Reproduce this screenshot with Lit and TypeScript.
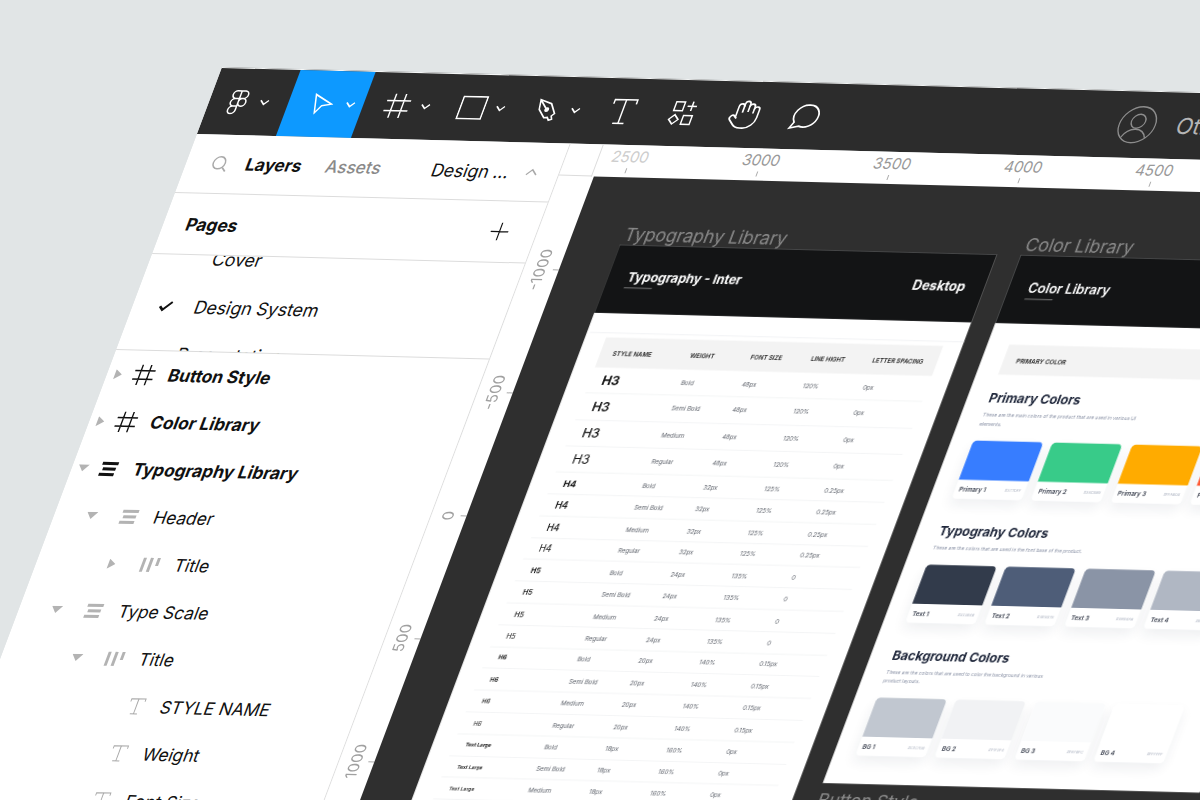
import { LitElement, html, css, svg } from "lit";
import { customElement } from "lit/decorators.js";

const chev = html`<svg class="chev" viewBox="0 0 10 7"><path d="M1 1l4 4 4-4" fill="none" stroke="currentColor" stroke-width="1.5"/></svg>`;
const tIcon = (c: string, s: number) => html`<svg width=${s} height=${s} viewBox="0 0 24 24" fill="none" stroke=${c} stroke-width="1.2"><path d="M3 6V2.5h18V6"/><line x1="12" y1="2.5" x2="12" y2="21.5"/><line x1="7.5" y1="21.5" x2="16.5" y2="21.5"/></svg>`;
const hash = (c: string, s: number, w: number) => html`<svg width=${s} height=${s} viewBox="0 0 26 26" fill="none" stroke=${c} stroke-width=${w}><path d="M8 1v24M18 1v24M1 8h24M1 18h24"/></svg>`;
const rowsIcon = (c: string) => html`<svg width="20" height="16" viewBox="0 0 20 16" fill=${c}><rect x="2" y="1" width="16" height="3"/><rect x="4" y="6.5" width="13" height="3"/><rect x="2" y="12" width="15" height="3"/></svg>`;
const colsIcon = html`<svg width="20" height="16" viewBox="0 0 20 16" fill="#b3b3b3"><rect x="2" y="1" width="3" height="14"/><rect x="9" y="1" width="3" height="14"/><rect x="16" y="1" width="3" height="8"/></svg>`;
const arrowR = html`<svg width="8" height="10" viewBox="0 0 8 10"><path d="M1 0l7 5-7 5z" fill="#b3b3b3"/></svg>`;
const arrowD = html`<svg width="11" height="8" viewBox="0 0 11 8"><path d="M0 0h11L5.500 7z" fill="#b3b3b3"/></svg>`;

type Layer = { n: string; l: number; a?: "r" | "d"; i: any; b?: boolean };
const layers: Layer[] = [
  { n: "Button Style", l: 0, a: "r", i: hash("#111", 22, 1.7), b: true },
  { n: "Color Library", l: 0, a: "r", i: hash("#111", 22, 1.7), b: true },
  { n: "Typography Library", l: 0, a: "d", i: rowsIcon("#111"), b: true },
  { n: "Header", l: 1, a: "d", i: rowsIcon("#b3b3b3") },
  { n: "Title", l: 2, a: "r", i: colsIcon },
  { n: "Type Scale", l: 1, a: "d", i: rowsIcon("#b3b3b3") },
  { n: "Title", l: 2, a: "d", i: colsIcon },
  { n: "STYLE NAME", l: 3, i: tIcon("#a8a8a8", 19) },
  { n: "Weight", l: 3, i: tIcon("#a8a8a8", 19) },
  { n: "Font Size", l: 3, i: tIcon("#a8a8a8", 19) },
];

const tw: [string, number][] = [["Bold", 700], ["Semi Bold", 600], ["Medium", 500], ["Regular", 400]];
const groups = [
  { n: "H3", c: "h3", s: "48px", lh: "120%", ls: "0px" },
  { n: "H4", c: "h4", s: "32px", lh: "125%", ls: "0.25px" },
  { n: "H5", c: "h5", s: "24px", lh: "135%", ls: "0" },
  { n: "H6", c: "h6", s: "20px", lh: "140%", ls: "0.15px" },
  { n: "Text Large", c: "tl", s: "18px", lh: "160%", ls: "0px" },
];

const sections = [
  { t: "Primary Colors", d: html`These are the main colors of the product that are used in various UI<br />elements.`,
    s: [["Primary 1", "#377DFF"], ["Primary 2", "#38CB89"], ["Primary 3", "#FFAB00"], ["Primary 4", "#FF5630"]] },
  { t: "Typograhy Colors", d: html`These are the colors that are used in the font base of the product.`,
    s: [["Text 1", "#323B4B"], ["Text 2", "#4E5D78"], ["Text 3", "#8A94A6"], ["Text 4", "#B0B7C3"]] },
  { t: "Background Colors", d: html`These are the colors that are used to color the background in various<br />product layouts.`,
    s: [["BG 1", "#C1C7D0"], ["BG 2", "#F1F2F4"], ["BG 3", "#FAFBFC"], ["BG 4", "#FFFFFF"]] },
];

@customElement("app-root")
export class AppRoot extends LitElement {
  static styles = css`
    :host { display: block; width: 1200px; height: 800px; overflow: hidden; background: #e1e5e6; position: relative;
      font-family: Inter, "Liberation Sans", sans-serif; }
    .stage { width: 1320px; height: 800px; transform-origin: 0 0; transform: matrix(1, 0.0256, -0.375, 1, 222, 67);
      display: flex; flex-direction: column; overflow: hidden; }
    .toolbar { height: 67px; flex: none; background: #2c2c2c; color: #fff; display: flex; align-items: stretch; border-top: 1px solid #f4f6f6; box-sizing: border-box; }
    .tool { width: 75px; flex: none; box-sizing: border-box; padding-left: 21px; display: flex; align-items: center; gap: 10px; }
    .tool.first { width: 79px; padding-left: 16px; gap: 8px; }
    .tool.on { background: #0d99ff; }
    .ic { width: 26px; height: 26px; flex: none; display: flex; align-items: center; justify-content: center; }
    .chev { width: 10px; height: 7px; flex: none; }
    .plain { display: flex; margin-left: 3.5px; }
    .cell { width: 61px; display: flex; align-items: center; justify-content: center; }
    .avatar { margin-left: 282px; display: flex; align-items: center; gap: 21px; color: #b5b5b5; font-size: 22px; }
    .body { flex: 1; display: flex; min-height: 0; }
    .panel { width: 374px; flex: none; background: #fff; color: #111; font-size: 17.2px; border-right: 1.5px solid #dcdcdc; box-sizing: border-box; }
    .tabs { height: 59px; display: flex; align-items: center; padding-left: 25px; border-bottom: 1.5px solid #dcdcdc; box-sizing: border-box; font-size: 17px; }
    .tabs .sr { margin-right: 17px; }
    .layers-t { width: 80px; font-weight: 700; }
    .assets-t { width: 106px; color: #8a8a8a; font-weight: 500; }
    .design-t { font-weight: 400; font-size: 17.5px; margin-right: 17px; }
    .pages { height: 61px; display: flex; align-items: center; justify-content: space-between; padding: 0 28px 0 23px; border-bottom: 1.5px solid #dcdcdc; box-sizing: border-box; font-weight: 700; }
    .plist { height: 96px; overflow: hidden; border-bottom: 1.5px solid #dcdcdc; box-sizing: border-box; }
    .page { height: 47.5px; display: grid; grid-template-columns: 62px 1fr; align-items: center; font-weight: 400; font-size: 17.6px; }
    .page:first-child { margin-top: -20.25px; }
    .page svg { margin-left: 26px; }
    .row { height: 47px; display: flex; align-items: center; }
    .row.b { font-weight: 700; }
    .arr { width: 20px; flex: none; display: flex; justify-content: center; }
    .tic { width: 28px; flex: none; display: flex; justify-content: center; }
    .nm { margin-left: 11px; white-space: nowrap; }
    .l0 { padding-left: 1px; } .l0 .tic { margin-left: 1.5px; }
    .l1 { padding-left: 27.5px; } .l1 .tic { margin-left: 13.5px; }
    .l2 { padding-left: 65px; } .l2 .tic { margin-left: 14px; }
    .l3 { padding-left: 138px; }
    .work { flex: 1; min-width: 0; display: flex; flex-direction: column; background: #fff; }
    .hruler { height: 32px; flex: none; position: relative; display: flex; margin-left: -1.5px; }
    .corner { position: absolute; left: 1.5px; top: 0; width: 32px; height: 31px; border-right: 1.5px solid #dcdcdc; border-bottom: 1.5px solid #dcdcdc; }
    .hc { width: 131px; flex: none; display: flex; flex-direction: column; align-items: center; color: #999; font-size: 15px; line-height: 20px; padding-top: 2px; box-sizing: border-box; }
    .hc.dim { color: #cdcdcd; }
    .hc i { width: 1px; height: 5px; margin-top: 1px; background: #aaa; }
    .lower { flex: 1; display: flex; min-height: 0; }
    .vruler { width: 35px; flex: none; padding-top: 32px; box-sizing: border-box; }
    .vc { height: 123px; display: flex; align-items: center; justify-content: flex-end; color: #a0a0a0; font-size: 15px; gap: 3px; }
    .vc span { writing-mode: vertical-rl; transform: rotate(180deg); }
    .vc i { width: 6px; height: 1px; background: #aaa; }
    .canvas { flex: 1; min-width: 0; background: #2f2f2f; display: flex; gap: 24px; padding: 47px 0 0 51px; align-items: flex-start; overflow: hidden; }
    .col { width: 377px; flex: none; filter: blur(0.3px); }
    .lbl { height: 20px; line-height: 20px; font-size: 17.5px; padding-left: 1.5px; color: #8b8b8b; white-space: nowrap; }
    .card { background: #fff; }
    .chead { height: 68px; background: #131415; color: #fff; display: flex; justify-content: space-between; padding: 24px 19px 0 20px; box-sizing: border-box; font-size: 12.5px; font-weight: 700; }
    .chead i { display: block; width: 28px; height: 1px; background: #777; margin-top: 3px; }
    .chead .m { font-weight: 600; font-size: 13px; }
    .chead .dk { font-size: 13px; }
    .faint { margin: 19px 0 4px 3px; border-top: 1px solid #f2f3f5; }
    .tbl { margin-left: 21px; width: 337px; }
    .thead { height: 30px; background: #f3f3f3; display: grid; grid-template-columns: 77.4px 60.6px 60.4px 61.4px 1fr; padding-left: 12.6px; box-sizing: border-box; align-items: center; font-size: 6px; font-weight: 600; color: #222; white-space: nowrap; }
    .tr { height: 21.8px; display: grid; grid-template-columns: 91px 61px 61px 60px 1fr; align-items: center; border-bottom: 1px solid #f4f5f6; box-sizing: border-box; font-size: 6px; color: #5a5f68; white-space: nowrap; }
    .tr.tall { height: 26.3px; }
    .tr b { padding-left: 12px; color: #111; }
    .h3 { font-size: 12.5px; } .h4 { font-size: 9px; } .h5 { font-size: 7px; } .h6 { font-size: 6px; } .tl { font-size: 5px; }
    .cbody { padding: 21px 0 28.3px 22px; }
    .band { width: 333px; height: 30px; background: #f3f3f3; box-sizing: border-box; padding-left: 13px; display: flex; align-items: center; font-size: 6px; font-weight: 600; color: #222; margin-bottom: -9px; }
    .sec { margin-top: 25.3px; }
    .sec h3 { margin: 0; font-size: 12.5px; line-height: 16px; font-weight: 700; color: #1c2438; white-space: nowrap; }
    .sec p { margin: 4.2px 0 12.4px; font-size: 4.8px; line-height: 8.4px; color: #8a92a6; white-space: nowrap; }
    .sws { display: flex; gap: 9.4px; }
    .sw { width: 70px; height: 58px; flex: none; background: #fff; border-radius: 4px; box-shadow: 0 6px 12px rgba(30,40,70,.07); display: flex; flex-direction: column; }
    .sw u { display: block; height: 39px; border-radius: 4px 4px 0 0; }
    .sw div { flex: 1; display: flex; justify-content: space-between; align-items: center; padding: 0 4px 0 4px; }
    .sw b { font-size: 6px; font-weight: 600; color: #3c4250; }
    .sw span { font-size: 3.8px; color: #a6adbc; }
    .next { margin-top: 7px; }
  `;

  render() {
    const logo = svg`<path d="M12 2H8.500a3.500 3.500 0 0 0 0 7H12V2zM12 2h3.500a3.500 3.500 0 0 1 0 7H12V2zM12 9H8.500a3.500 3.500 0 0 0 0 7H12V9zM12 12.500a3.500 3.500 0 1 0 7 0 3.500 3.500 0 0 0-7 0zM12 16H8.500A3.500 3.500 0 1 0 12 19.500V16z"/>`;
    const cursor = svg`<path d="M2 2l20 10-10 2-5 8z"/>`;
    return html`<div class="stage">
      <div class="toolbar">
        <div class="tool first"><span class="ic"><svg width="26" height="26" viewBox="0 0 24 24" fill="none" stroke="#fff" stroke-width="1.4">${logo}</svg></span>${chev}</div>
        <div class="tool on"><span class="ic"><svg width="22" height="22" viewBox="0 0 24 24" fill="none" stroke="#fff" stroke-width="1.6">${cursor}</svg></span>${chev}</div>
        <div class="tool"><span class="ic">${hash("#fff", 26, 1.5)}</span>${chev}</div>
        <div class="tool"><span class="ic"><svg width="26" height="24" viewBox="0 0 26 24" fill="none" stroke="#fff" stroke-width="1.6"><rect x="1" y="1" width="24" height="22"/></svg></span>${chev}</div>
        <div class="tool"><span class="ic"><svg width="26" height="26" viewBox="0 0 24 24" fill="none" stroke="#fff" stroke-width="1.4"><path d="M3 3l11 3.500 6 9-2.200 2.200 1.400 3-2.600 1-2-2.600-3 .4-7-7.500zM3 3l7.500 8"/><circle cx="11.500" cy="12" r="1.400" fill="#fff"/></svg></span>${chev}</div>
        <div class="plain">
          <div class="cell">${tIcon("#fff", 30)}</div>
          <div class="cell"><svg width="28" height="28" viewBox="0 0 24 24" fill="none" stroke="#fff" stroke-width="1.3"><rect x="3" y="2.500" width="7.500" height="7.500"/><path d="M17.500 2v8M13.500 6h8"/><path d="M5.500 13.500l4 4-4 4-4-4z"/><rect x="13" y="14" width="7.500" height="7.500"/></svg></div>
          <div class="cell"><svg width="32" height="32" viewBox="0 0 24 24" fill="none" stroke="#fff" stroke-width="1.25"><path d="M18 11V6a2 2 0 0 0-2-2a2 2 0 0 0-2 2"/><path d="M14 10V4a2 2 0 0 0-2-2a2 2 0 0 0-2 2v2"/><path d="M10 10.500V6a2 2 0 0 0-2-2a2 2 0 0 0-2 2v8"/><path d="M18 8a2 2 0 1 1 4 0v6a8 8 0 0 1-8 8h-2c-2.800 0-4.500-.86-5.990-2.340l-3.600-3.600a2 2 0 0 1 2.830-2.820L7 15"/></svg></div>
          <div class="cell"><svg width="31" height="31" viewBox="0 0 24 24" fill="none" stroke="#fff" stroke-width="1.3"><path d="M13 3a9 8.500 0 1 1-3.800 16.300L2.500 21l2.200-4.600A9 8.500 0 0 1 13 3z"/></svg></div>
        </div>
        <div class="avatar"><svg width="38" height="38" viewBox="0 0 38 38" fill="none" stroke="#8c8c8c" stroke-width="1.3"><circle cx="19" cy="19" r="18"/><circle cx="19" cy="15.500" r="7"/><path d="M7 32c2.500-6 7-8.500 12-8.500S28.500 26 31 32"/></svg><span>Other</span></div>
      </div>
      <div class="body">
        <div class="panel">
          <div class="tabs">
            <svg class="sr" width="18" height="18" viewBox="0 0 18 18" fill="none" stroke="#aaa" stroke-width="1.5"><circle cx="8" cy="8" r="6"/><path d="M12.500 12.500l4 4"/></svg>
            <span class="layers-t">Layers</span><span class="assets-t">Assets</span><span class="design-t">Design ...</span>
            <svg width="12" height="8" viewBox="0 0 12 8" fill="none" stroke="#aaa" stroke-width="1.400"><path d="M1 7l5-5 5 5"/></svg>
          </div>
          <div class="pages"><span>Pages</span><svg width="18" height="18" viewBox="0 0 18 18" stroke="#111" stroke-width="1.2"><path d="M9 0v18M0 9h18"/></svg></div>
          <div class="plist">
            <div class="page"><span></span><span>Cover</span></div>
            <div class="page"><svg width="14" height="11" viewBox="0 0 14 11" fill="none" stroke="#111" stroke-width="2.400"><path d="M1.500 5.500l3.500 3.500 7.500-8"/></svg><span>Design System</span></div>
            <div class="page"><span></span><span>Presentation</span></div>
          </div>
          ${layers.map((r) => html`<div class="row l${r.l} ${r.b ? "b" : ""}">
            ${r.a ? html`<span class="arr">${r.a === "r" ? arrowR : arrowD}</span>` : ""}
            <span class="tic">${r.i}</span><span class="nm">${r.n}</span></div>`)}
        </div>
        <div class="work">
          <div class="hruler">
            <div class="corner"></div>
            ${["2500", "3000", "3500", "4000", "4500", "5000", "5500"].map((t, i) => html`<div class="hc ${i === 0 ? "dim" : ""}">${t}<i></i></div>`)}
          </div>
          <div class="lower">
            <div class="vruler">${["-1000", "-500", "0", "500", "1000"].map((t) => html`<div class="vc"><span>${t}</span><i></i></div>`)}</div>
            <div class="canvas">
              <div class="col">
                <div class="lbl">Typography Library</div>
                <div class="card">
                  <div class="chead"><div>Typography - Inter<i></i></div><div class="dk">Desktop</div></div>
                  <div class="faint"></div>
                  <div class="tbl">
                    <div class="thead"><span>STYLE NAME</span><span>WEIGHT</span><span>FONT SIZE</span><span>LINE HIGHT</span><span>LETTER SPACING</span></div>
                    ${groups.flatMap((g) => tw.map(([l, wt]) => html`<div class="tr ${g.c === "h3" ? "tall" : ""}">
                      <b class=${g.c} style="font-weight:${wt}">${g.n}</b><span>${l}</span><span>${g.s}</span><span>${g.lh}</span><span>${g.ls}</span></div>`))}
                  </div>
                </div>
              </div>
              <div class="col">
                <div class="lbl">Color Library</div>
                <div class="card">
                  <div class="chead"><div class="m">Color Library<i></i></div></div>
                  <div class="cbody">
                    <div class="band">PRIMARY COLOR</div>
                    ${sections.map((s) => html`<div class="sec"><h3>${s.t}</h3><p>${s.d}</p>
                      <div class="sws">${s.s.map(([n, c]) => html`<div class="sw"><u style="background:${c}"></u><div><b>${n}</b><span>${c}</span></div></div>`)}</div></div>`)}
                  </div>
                </div>
                <div class="lbl next">Button Style</div>
              </div>
            </div>
          </div>
        </div>
      </div>
    </div>`;
  }
}
